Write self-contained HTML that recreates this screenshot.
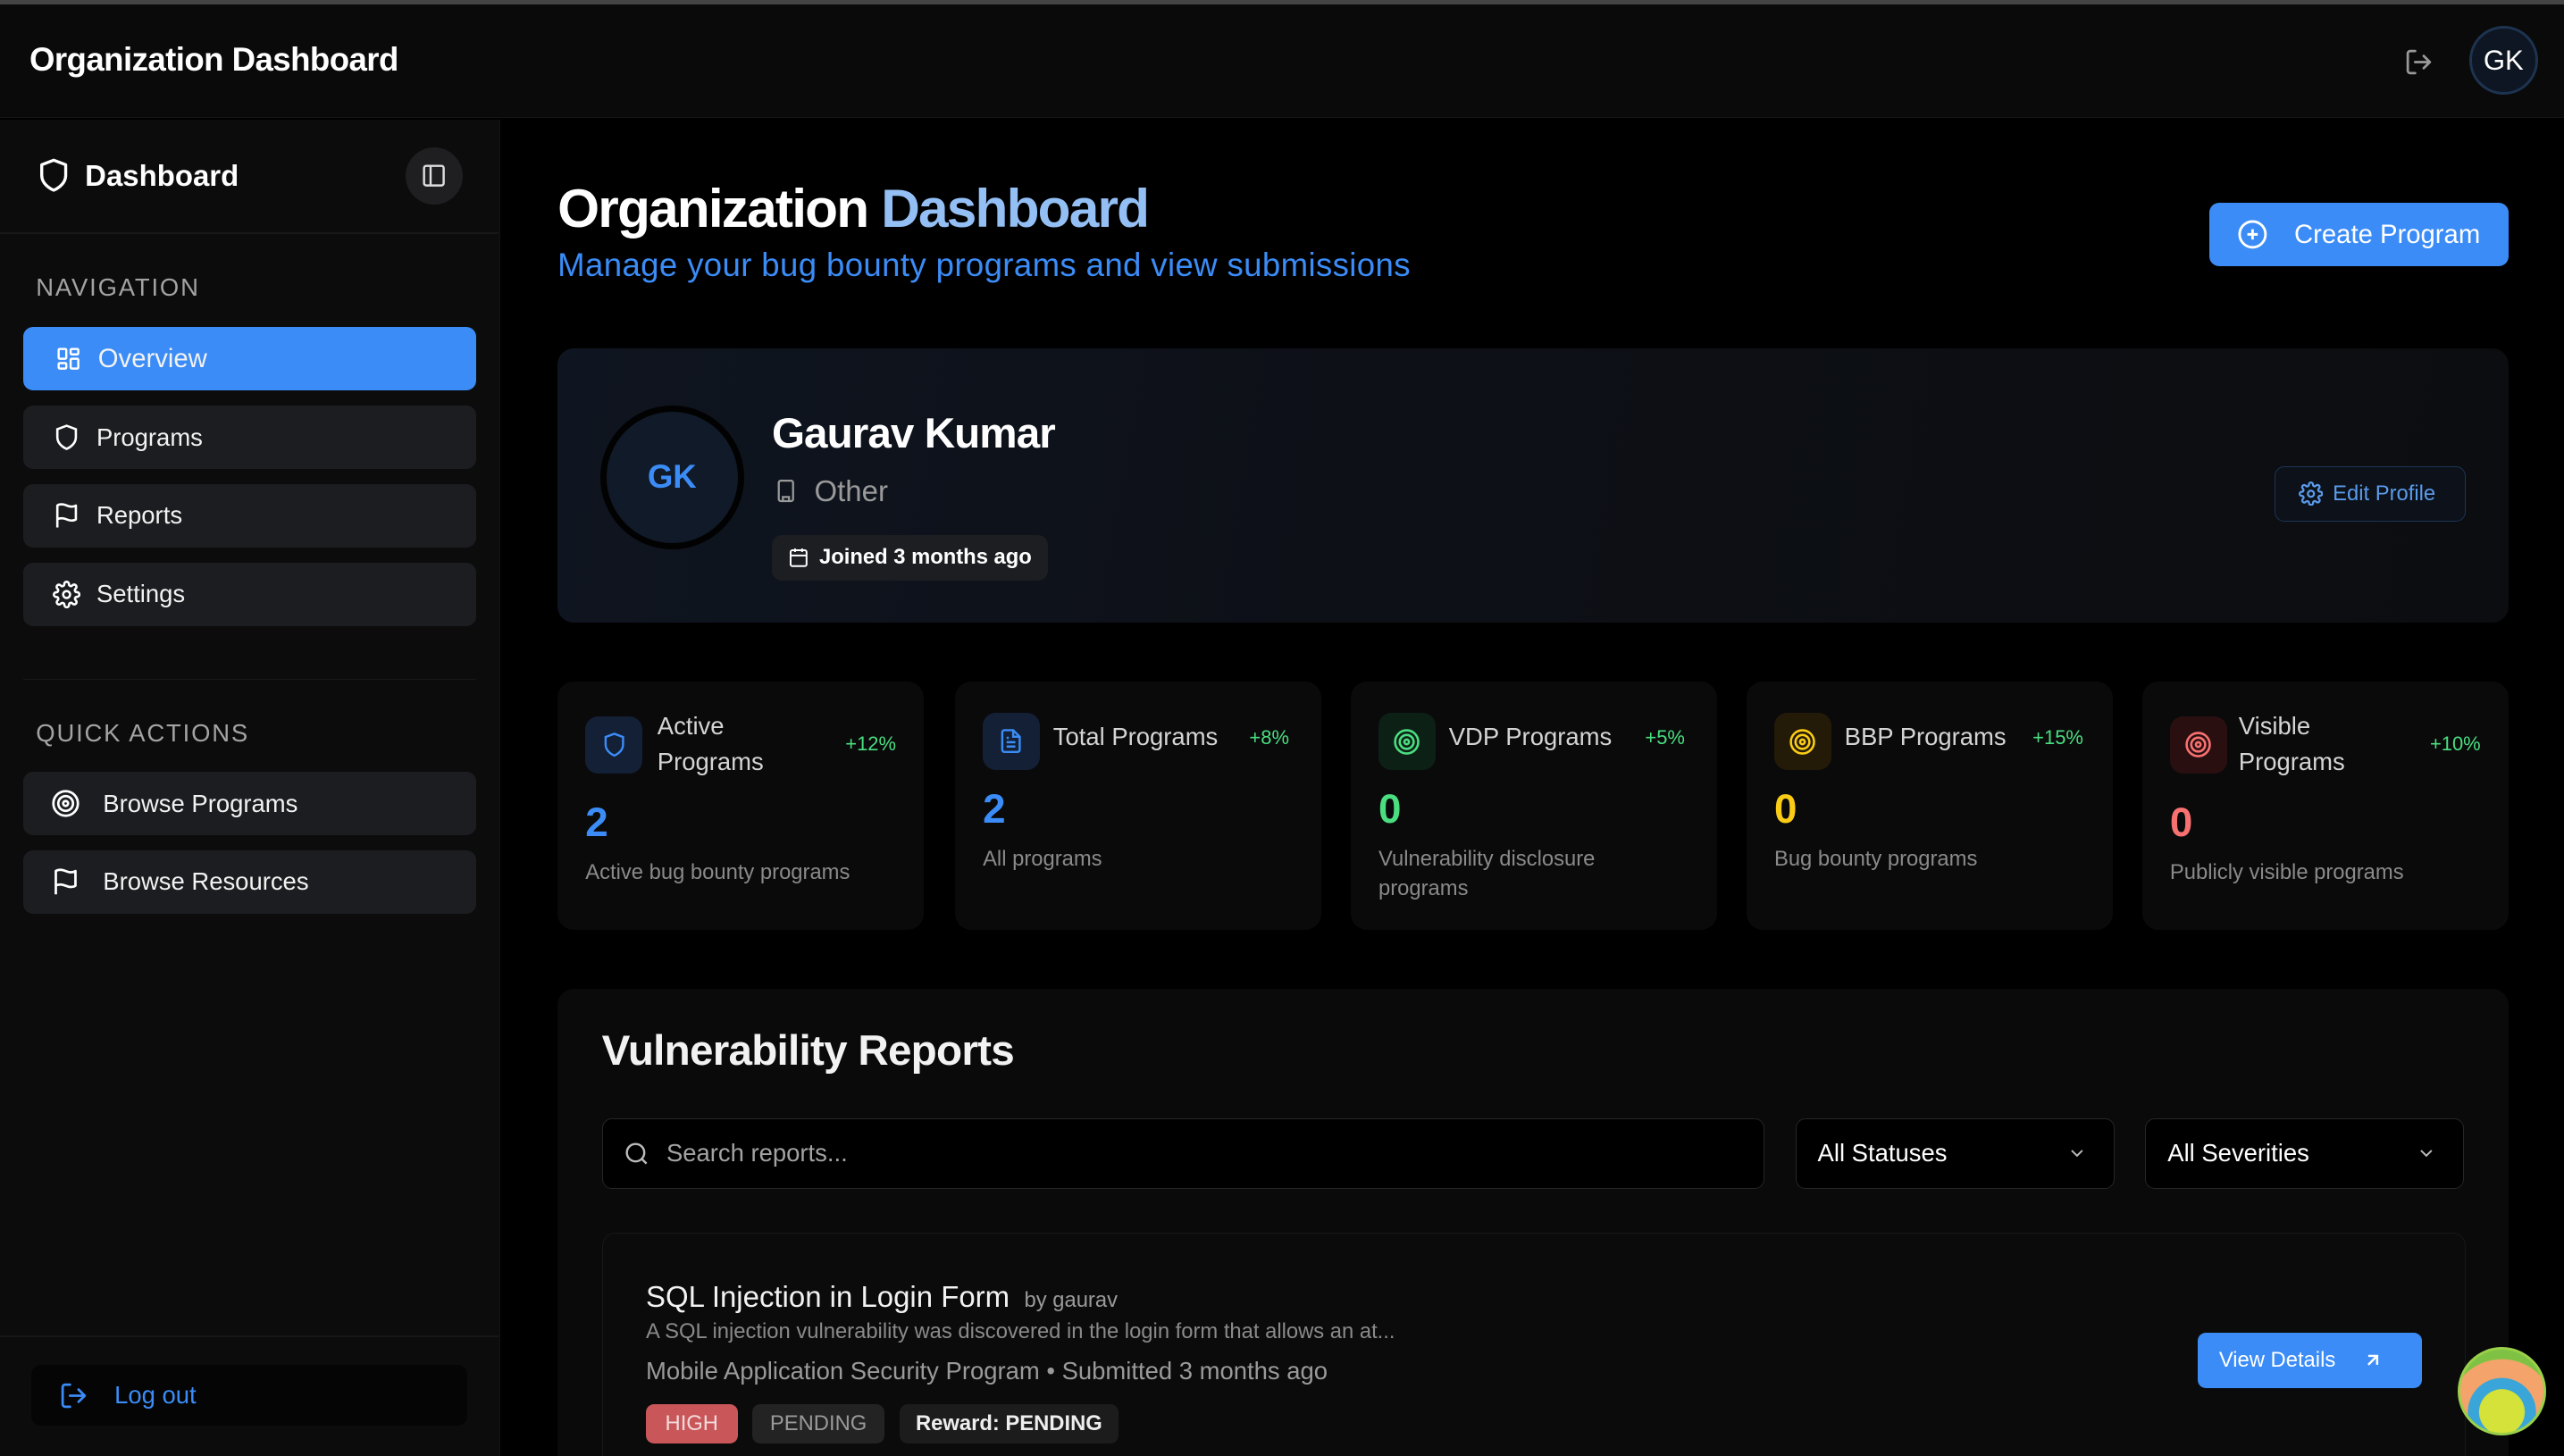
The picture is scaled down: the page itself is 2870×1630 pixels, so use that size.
<!DOCTYPE html>
<html><head><meta charset="utf-8"><style>
*{box-sizing:border-box;margin:0;padding:0}
html,body{width:2870px;height:1630px;overflow:hidden;background:#000}
#r{zoom:1.8304;width:1568px;height:891px;position:relative;font-family:"Liberation Sans",sans-serif;color:#fff;background:#000;overflow:hidden}
.a{position:absolute}
svg{display:block}
.nav{position:absolute;left:14px;width:277px;height:39px;border-radius:6px;background:#1c1d20;display:flex;align-items:center;padding-left:18px;font-size:15px;color:#f2f2f2}
.nav svg{margin-right:10px}
.card{position:absolute;top:417px;width:224px;height:152px;background:#0a0a0b;border-radius:10px}
.ic{position:absolute;left:17px;top:19px;width:35px;height:35px;border-radius:8px;display:flex;align-items:center;justify-content:center}
.pct{position:absolute;font-size:12px;color:#4ade80}
.lbl{position:absolute;font-size:15px;color:#d4d4d4;line-height:22px}
.num{position:absolute;left:17px;font-size:25px;font-weight:bold}
.sub{position:absolute;left:17px;font-size:13px;color:#8a8a8a;line-height:18px}
</style></head><body><div id="r">
<div class="a" style="left:0;top:0;width:1568px;height:3px;background:#444"></div>
<div class="a" style="left:0;top:3px;width:1568px;height:69px;background:#0a0a0a;border-bottom:1px solid #161616"></div>
<div class="a" style="left:18px;top:25px;font-size:20px;font-weight:bold;letter-spacing:-0.3px">Organization Dashboard</div>
<svg class="a" style="left:1470px;top:29px" width="18" height="18" viewBox="0 0 24 24" fill="none" stroke="#999" stroke-width="2" stroke-linecap="round" stroke-linejoin="round"><path d="M9 21H5a2 2 0 0 1-2-2V5a2 2 0 0 1 2-2h4M16 17l5-5-5-5M21 12H9"/></svg>
<div class="a" style="left:1510px;top:16px;width:42px;height:42px;border-radius:50%;background:#0d1622;border:2px solid #1e3350;display:flex;align-items:center;justify-content:center;font-size:17px">GK</div>

<div class="a" style="left:0;top:73px;width:306px;height:818px;background:#0c0c0c;border-right:1px solid #141414"></div>
<svg class="a" style="left:22px;top:96px" width="22" height="22" viewBox="0 0 24 24" fill="none" stroke="#fff" stroke-width="2" stroke-linejoin="round"><path d="M12 22s8-3 8-10V5l-8-3-8 3v7c0 7 8 10 8 10z"/></svg>
<div class="a" style="left:52px;top:97px;font-size:18px;font-weight:bold">Dashboard</div>
<div class="a" style="left:248px;top:90px;width:35px;height:35px;border-radius:50%;background:#1f1f22;display:flex;align-items:center;justify-content:center"><svg width="16" height="16" viewBox="0 0 24 24" fill="none" stroke="#ddd" stroke-width="2"><rect x="3" y="3" width="18" height="18" rx="2"/><path d="M9 3v18"/></svg></div>
<div class="a" style="left:0;top:142px;width:305px;height:1px;background:#181818"></div>
<div class="a" style="left:22px;top:167px;font-size:15px;color:#a3a3a3;letter-spacing:1px">NAVIGATION</div>
<div class="nav" style="top:200px;background:#3b8cf7;padding-left:20px;font-size:16px"><svg width="16" height="16" viewBox="0 0 24 24" fill="none" stroke="#fff" stroke-width="2"><rect x="3" y="3" width="7" height="9" rx="1"/><rect x="14" y="3" width="7" height="5" rx="1"/><rect x="14" y="12" width="7" height="9" rx="1"/><rect x="3" y="16" width="7" height="5" rx="1"/></svg>Overview</div>
<div class="nav" style="top:248px"><svg width="17" height="17" viewBox="0 0 24 24" fill="none" stroke="#fff" stroke-width="2"><path d="M12 22s8-3 8-10V5l-8-3-8 3v7c0 7 8 10 8 10z"/></svg>Programs</div>
<div class="nav" style="top:296px"><svg width="17" height="17" viewBox="0 0 24 24" fill="none" stroke="#fff" stroke-width="2" stroke-linejoin="round"><path d="M4 15s1-1 4-1 5 2 8 2 4-1 4-1V3s-1 1-4 1-5-2-8-2-4 1-4 1zM4 22v-7"/></svg>Reports</div>
<div class="nav" style="top:344px"><svg width="17" height="17" viewBox="0 0 24 24" fill="none" stroke="#fff" stroke-width="2"><circle cx="12" cy="12" r="3"/><path d="M19.4 15a1.7 1.7 0 0 0 .3 1.8l.1.1a2 2 0 1 1-2.8 2.8l-.1-.1a1.7 1.7 0 0 0-1.8-.3 1.7 1.7 0 0 0-1 1.5V21a2 2 0 1 1-4 0v-.1a1.7 1.7 0 0 0-1.1-1.5 1.7 1.7 0 0 0-1.8.3l-.1.1a2 2 0 1 1-2.8-2.8l.1-.1a1.7 1.7 0 0 0 .3-1.8 1.7 1.7 0 0 0-1.5-1H3a2 2 0 1 1 0-4h.1a1.7 1.7 0 0 0 1.5-1.1 1.7 1.7 0 0 0-.3-1.8l-.1-.1a2 2 0 1 1 2.8-2.8l.1.1a1.7 1.7 0 0 0 1.800.3H9a1.7 1.7 0 0 0 1-1.500V3a2 2 0 1 1 4 0v.1a1.7 1.7 0 0 0 1 1.5 1.7 1.7 0 0 0 1.8-.3l.1-.1a2 2 0 1 1 2.8 2.8l-.1.1a1.7 1.7 0 0 0-.3 1.8V9a1.7 1.7 0 0 0 1.5 1H21a2 2 0 1 1 0 4h-.1a1.7 1.7 0 0 0-1.5 1z"/></svg>Settings</div>
<div class="a" style="left:14px;top:415px;width:277px;height:1px;background:#181818"></div>
<div class="a" style="left:22px;top:440px;font-size:15px;color:#a3a3a3;letter-spacing:1px">QUICK ACTIONS</div>
<div class="nav" style="top:472px;padding-left:17px"><svg width="18" height="18" viewBox="0 0 24 24" fill="none" stroke="#fff" stroke-width="2"><circle cx="12" cy="12" r="10"/><circle cx="12" cy="12" r="6"/><circle cx="12" cy="12" r="2"/></svg><span style="margin-left:4px">Browse Programs</span></div>
<div class="nav" style="top:520px;padding-left:17px"><svg width="18" height="18" viewBox="0 0 24 24" fill="none" stroke="#fff" stroke-width="2" stroke-linejoin="round"><path d="M4 15s1-1 4-1 5 2 8 2 4-1 4-1V3s-1 1-4 1-5-2-8-2-4 1-4 1zM4 22v-7"/></svg><span style="margin-left:4px">Browse Resources</span></div>
<div class="a" style="left:0;top:817px;width:305px;height:1px;background:#181818"></div>
<div class="a" style="left:19px;top:835px;width:267px;height:37px;background:#050505;border-radius:6px;display:flex;align-items:center;padding-left:17px;font-size:15px;color:#3b8cf7"><svg width="18" height="18" viewBox="0 0 24 24" fill="none" stroke="#3b8cf7" stroke-width="2" stroke-linecap="round" stroke-linejoin="round" style="margin-right:16px"><path d="M9 21H5a2 2 0 0 1-2-2V5a2 2 0 0 1 2-2h4M16 17l5-5-5-5M21 12H9"/></svg>Log out</div>

<div class="a" style="left:341px;top:108px;font-size:33px;font-weight:bold;letter-spacing:-1px">Organization <span style="color:#93bff5">Dashboard</span></div>
<div class="a" style="left:341px;top:151px;font-size:20px;color:#3b8cf7;letter-spacing:0.2px">Manage your bug bounty programs and view submissions</div>
<div class="a" style="left:1351px;top:124px;width:183px;height:39px;background:#3b8cf7;border-radius:6px;display:flex;align-items:center;padding-left:17px;font-size:16px"><svg width="19" height="19" viewBox="0 0 24 24" fill="none" stroke="#fff" stroke-width="2"><circle cx="12" cy="12" r="10"/><path d="M12 8v8M8 12h8"/></svg><span style="margin-left:16px">Create Program</span></div>

<div class="a" style="left:341px;top:213px;width:1193px;height:168px;border-radius:10px;background:linear-gradient(100deg,#0f1520 0%,#0d1017 40%,#0c0d10 100%)"></div>
<div class="a" style="left:367px;top:248px;width:88px;height:88px;border-radius:50%;background:#111a28;border:4px solid #020202;display:flex;align-items:center;justify-content:center;font-size:20px;font-weight:bold;color:#3b8cf7">GK</div>
<div class="a" style="left:472px;top:250px;font-size:26px;font-weight:bold;letter-spacing:-0.5px">Gaurav Kumar</div>
<svg class="a" style="left:473px;top:292px" width="15" height="17" viewBox="0 0 24 24" fill="none" stroke="#999" stroke-width="2"><rect x="5" y="2" width="14" height="20" rx="2"/><path d="M9 22v-4h6v4M9 6h.01M12 6h.01M15 6h.01M9 10h.01M12 10h.01M15 10h.01M9 14h.01M12 14h.01M15 14h.01"/></svg>
<div class="a" style="left:498px;top:290px;font-size:18px;color:#9a9a9a">Other</div>
<div class="a" style="left:472px;top:327px;width:169px;height:28px;border-radius:6px;background:#1c1e22;display:flex;align-items:center;padding-left:10px;font-size:13px;font-weight:bold"><svg width="13" height="13" viewBox="0 0 24 24" fill="none" stroke="#fff" stroke-width="2"><rect x="3" y="4" width="18" height="18" rx="2"/><path d="M16 2v4M8 2v4M3 10h18"/></svg><span style="margin-left:6px">Joined 3 months ago</span></div>
<div class="a" style="left:1391px;top:285px;width:117px;height:34px;border-radius:6px;border:1px solid #1d3556;background:#0c111a;display:flex;align-items:center;padding-left:14px;font-size:13px;color:#5a9bea"><svg width="15" height="15" viewBox="0 0 24 24" fill="none" stroke="#5a9bea" stroke-width="2"><circle cx="12" cy="12" r="3"/><path d="M19.4 15a1.7 1.7 0 0 0 .3 1.8l.1.1a2 2 0 1 1-2.8 2.8l-.1-.1a1.7 1.7 0 0 0-1.8-.3 1.7 1.7 0 0 0-1 1.5V21a2 2 0 1 1-4 0v-.1a1.7 1.7 0 0 0-1.1-1.5 1.7 1.7 0 0 0-1.8.3l-.1.1a2 2 0 1 1-2.8-2.8l.1-.1a1.7 1.7 0 0 0 .3-1.8 1.7 1.7 0 0 0-1.5-1H3a2 2 0 1 1 0-4h.1a1.7 1.7 0 0 0 1.5-1.1 1.7 1.7 0 0 0-.3-1.8l-.1-.1a2 2 0 1 1 2.8-2.8l.1.1a1.7 1.7 0 0 0 1.8.3H9a1.7 1.7 0 0 0 1-1.5V3a2 2 0 1 1 4 0v.1a1.7 1.7 0 0 0 1 1.5 1.7 1.7 0 0 0 1.8-.3l.1-.1a2 2 0 1 1 2.8 2.8l-.1.1a1.7 1.7 0 0 0-.3 1.8V9a1.7 1.7 0 0 0 1.5 1H21a2 2 0 1 1 0 4h-.1a1.7 1.7 0 0 0-1.5 1z"/></svg><span style="margin-left:6px">Edit Profile</span></div>

<div class="card" style="left:341px"><div class="ic" style="top:21px;background:#132036"><svg width="16" height="16" viewBox="0 0 24 24" fill="none" stroke="#3b8cf7" stroke-width="2"><path d="M12 22s8-3 8-10V5l-8-3-8 3v7c0 7 8 10 8 10z"/></svg></div><div class="lbl" style="left:61px;top:16px">Active<br>Programs</div><div class="pct" style="right:17px;top:31px">+12%</div><div class="num" style="top:72px;color:#3b8cf7">2</div><div class="sub" style="top:108px">Active bug bounty programs</div></div>
<div class="card" style="left:584px"><div class="ic" style="background:#132036"><svg width="16" height="16" viewBox="0 0 24 24" fill="none" stroke="#3b8cf7" stroke-width="2"><path d="M14 2H6a2 2 0 0 0-2 2v16a2 2 0 0 0 2 2h12a2 2 0 0 0 2-2V8z"/><path d="M14 2v6h6M16 13H8M16 17H8M10 9H8"/></svg></div><div class="lbl" style="left:60px;top:23px">Total Programs</div><div class="pct" style="left:180px;top:27px">+8%</div><div class="num" style="top:64px;color:#3b8cf7">2</div><div class="sub" style="top:100px">All programs</div></div>
<div class="card" style="left:826px"><div class="ic" style="background:#0d2016"><svg width="17" height="17" viewBox="0 0 24 24" fill="none" stroke="#4ade80" stroke-width="2"><circle cx="12" cy="12" r="10"/><circle cx="12" cy="12" r="6"/><circle cx="12" cy="12" r="2"/></svg></div><div class="lbl" style="left:60px;top:23px">VDP Programs</div><div class="pct" style="left:180px;top:27px">+5%</div><div class="num" style="top:64px;color:#4ade80">0</div><div class="sub" style="top:100px">Vulnerability disclosure<br>programs</div></div>
<div class="card" style="left:1068px"><div class="ic" style="background:#241a08"><svg width="17" height="17" viewBox="0 0 24 24" fill="none" stroke="#facc15" stroke-width="2"><circle cx="12" cy="12" r="10"/><circle cx="12" cy="12" r="6"/><circle cx="12" cy="12" r="2"/></svg></div><div class="lbl" style="left:60px;top:23px">BBP Programs</div><div class="pct" style="left:175px;top:27px">+15%</div><div class="num" style="top:64px;color:#facc15">0</div><div class="sub" style="top:100px">Bug bounty programs</div></div>
<div class="card" style="left:1310px"><div class="ic" style="top:21px;background:#2a0f10"><svg width="17" height="17" viewBox="0 0 24 24" fill="none" stroke="#f87171" stroke-width="2"><circle cx="12" cy="12" r="10"/><circle cx="12" cy="12" r="6"/><circle cx="12" cy="12" r="2"/></svg></div><div class="lbl" style="left:59px;top:16px">Visible<br>Programs</div><div class="pct" style="right:17px;top:31px">+10%</div><div class="num" style="top:72px;color:#f87171">0</div><div class="sub" style="top:108px">Publicly visible programs</div></div>

<div class="a" style="left:341px;top:605px;width:1193px;height:300px;border-radius:10px;background:#0a0a0a"></div>
<div class="a" style="left:368px;top:628px;font-size:26px;font-weight:bold;color:#f2f2f2;letter-spacing:-0.4px">Vulnerability Reports</div>
<div class="a" style="left:368px;top:684px;width:711px;height:43px;border-radius:6px;border:1px solid #262626;background:#000;display:flex;align-items:center;padding-left:13px;font-size:15px;color:#a3a3a3"><svg width="16" height="16" viewBox="0 0 24 24" fill="none" stroke="#bbb" stroke-width="2"><circle cx="11" cy="11" r="8"/><path d="M21 21l-4.3-4.3"/></svg><span style="margin-left:10px">Search reports...</span></div>
<div class="a" style="left:1098px;top:684px;width:195px;height:43px;border-radius:6px;border:1px solid #262626;background:#000;display:flex;align-items:center;justify-content:space-between;padding:0 16px 0 13px;font-size:15px">All Statuses<svg width="13" height="13" viewBox="0 0 24 24" fill="none" stroke="#bbb" stroke-width="2"><path d="M6 9l6 6 6-6"/></svg></div>
<div class="a" style="left:1312px;top:684px;width:195px;height:43px;border-radius:6px;border:1px solid #262626;background:#000;display:flex;align-items:center;justify-content:space-between;padding:0 16px 0 13px;font-size:15px">All Severities<svg width="13" height="13" viewBox="0 0 24 24" fill="none" stroke="#bbb" stroke-width="2"><path d="M6 9l6 6 6-6"/></svg></div>
<div class="a" style="left:368px;top:754px;width:1140px;height:160px;border-radius:8px;border:1px solid #181818;background:#0b0b0b"></div>
<div class="a" style="left:395px;top:783px;font-size:18px;color:#f2f2f2">SQL Injection in Login Form <span style="font-size:13px;color:#9a9a9a;margin-left:4px">by gaurav</span></div>
<div class="a" style="left:395px;top:807px;font-size:13px;color:#8a8a8a">A SQL injection vulnerability was discovered in the login form that allows an at...</div>
<div class="a" style="left:395px;top:830px;font-size:15px;color:#9a9a9a">Mobile Application Security Program • Submitted 3 months ago</div>
<div class="a" style="left:395px;top:859px;width:56px;height:24px;border-radius:5px;background:#c9575a;display:flex;align-items:center;justify-content:center;font-size:13px;color:#f4dada">HIGH</div>
<div class="a" style="left:460px;top:859px;width:81px;height:24px;border-radius:5px;background:#232323;display:flex;align-items:center;justify-content:center;font-size:13px;color:#999">PENDING</div>
<div class="a" style="left:550px;top:859px;width:134px;height:24px;border-radius:5px;background:#1c1c1c;display:flex;align-items:center;justify-content:center;font-size:13px;font-weight:bold;color:#eee">Reward: PENDING</div>
<div class="a" style="left:1344px;top:815px;width:137px;height:34px;border-radius:5px;background:#3b8cf7;display:flex;align-items:center;padding-left:13px;font-size:13px">View Details<svg style="margin-left:16px" width="13" height="13" viewBox="0 0 24 24" fill="none" stroke="#fff" stroke-width="2.5"><path d="M7 17L17 7M7 7h10v10"/></svg></div>
<div class="a" style="left:1503px;top:824px;width:54px;height:54px;border-radius:50%;background:radial-gradient(circle at 50% 75%,#d4e23a 0 30%,#3aa5d8 31% 45%,#f4a46a 46% 70%,#7fc243 71%);border:2px solid #9ad04a"></div>
</div></body></html>
